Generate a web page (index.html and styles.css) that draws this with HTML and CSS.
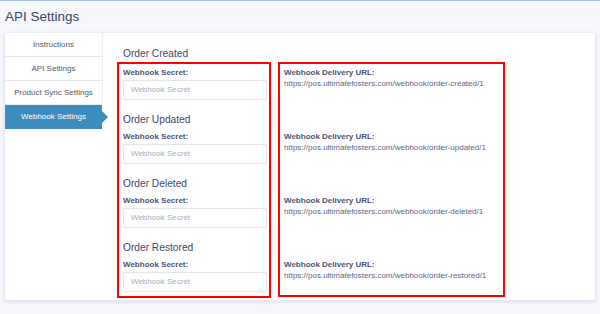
FILE: index.html
```html
<!DOCTYPE html>
<html>
<head>
<meta charset="utf-8">
<link rel="stylesheet" href="styles.css">
</head>
<body>
<header class="page-head"><h1 class="page-title">API Settings</h1></header>
<div class="card">
  <nav class="tabs">
    <div class="tab">Instructions</div>
    <div class="tab">API Settings</div>
    <div class="tab">Product Sync Settings</div>
    <div class="tab tab-active">Webhook Settings</div>
  </nav>
  <main class="content">
    <h2 class="event-title first">Order Created</h2>
    <div class="columns">
      <div class="box box-secrets">
        <div class="field">
          <div class="label">Webhook Secret:</div>
          <div class="input">Webhook Secret</div>
        </div>
        <h2 class="event-title">Order Updated</h2>
        <div class="field">
          <div class="label">Webhook Secret:</div>
          <div class="input">Webhook Secret</div>
        </div>
        <h2 class="event-title">Order Deleted</h2>
        <div class="field">
          <div class="label">Webhook Secret:</div>
          <div class="input">Webhook Secret</div>
        </div>
        <h2 class="event-title">Order Restored</h2>
        <div class="field">
          <div class="label">Webhook Secret:</div>
          <div class="input">Webhook Secret</div>
        </div>
      </div>
      <div class="box box-urls">
        <div class="url-item">
          <div class="label">Webhook Delivery URL:</div>
          <div class="url">https://pos.ultimatefosters.com/webhook/order-created/1</div>
        </div>
        <div class="url-item">
          <div class="label">Webhook Delivery URL:</div>
          <div class="url">https://pos.ultimatefosters.com/webhook/order-updated/1</div>
        </div>
        <div class="url-item">
          <div class="label">Webhook Delivery URL:</div>
          <div class="url">https://pos.ultimatefosters.com/webhook/order-deleted/1</div>
        </div>
        <div class="url-item">
          <div class="label">Webhook Delivery URL:</div>
          <div class="url">https://pos.ultimatefosters.com/webhook/order-restored/1</div>
        </div>
      </div>
    </div>
  </main>
</div>
</body>
</html>
```
FILE: styles.css
```css
html, body {
  margin: 0;
  padding: 0;
}
body {
  background: #f5f7fc;
  border-top: 1px solid #a4bff2;
  font-family: "Liberation Sans", Arial, sans-serif;
  color: #3d4465;
  width: 600px;
  height: 313px;
  overflow: hidden;
}
.page-head {
  padding: 8px 5px 8px 5px;
}
.page-title {
  margin: 0;
  font-size: 13.5px;
  line-height: 16px;
  font-weight: normal;
  color: #3d4465;
}
.card {
  margin: 0 5px;
  height: 267px;
  background: #fff;
  border-radius: 2px;
  box-shadow: 0 1px 5px rgba(30, 40, 80, 0.14);
  display: flex;
  align-items: flex-start;
}
.tabs {
  width: 98px;
  flex: none;
  display: flex;
  flex-direction: column;
}
.tab {
  height: 23px;
  line-height: 23px;
  border-bottom: 1px solid #e6e8ec;
  border-right: 1px solid #eceef1;
  font-size: 8px;
  color: #555a66;
  text-align: center;
  white-space: nowrap;
}
.tab-active {
  position: relative;
  background: #3d8cbe;
  color: #fff;
  height: 24px;
  line-height: 24px;
  border-bottom: none;
  border-right: none;
  margin-right: 1px;
}
.tab-active::after {
  content: "";
  position: absolute;
  right: -6px;
  top: 6px;
  border-left: 6px solid #3d8cbe;
  border-top: 6px solid transparent;
  border-bottom: 6px solid transparent;
}
.content {
  padding: 13px 0 0 14px;
}
.event-title {
  margin: 12px 0 3px 0;
  font-size: 10.2px;
  line-height: 16px;
  font-weight: normal;
  color: #414868;
}
.event-title.first {
  margin: 0 0 0 6px;
}
.columns {
  display: flex;
  gap: 7px;
  align-items: stretch;
}
.box {
  border: 2px solid #ff0000;
  box-sizing: border-box;
}
.box-secrets {
  width: 154px;
  padding: 3px 2px 4px 4px;
}
.box-urls {
  width: 227px;
  padding: 3px 4px 4px 4px;
  margin-bottom: 1px;
}
.label {
  font-size: 8px;
  line-height: 11px;
  font-weight: bold;
  color: #4b5378;
  white-space: nowrap;
}
.input {
  margin-top: 2px;
  height: 20px;
  box-sizing: border-box;
  border: 1px solid #e3e6eb;
  border-radius: 1px;
  padding-left: 7px;
  font-size: 8px;
  line-height: 18px;
  color: #a9adb8;
}
.url-item {
  margin-bottom: 41px;
}
.url-item:last-child {
  margin-bottom: 0;
}
.url {
  font-size: 8px;
  line-height: 12px;
  color: #5a6888;
  white-space: nowrap;
}
```
